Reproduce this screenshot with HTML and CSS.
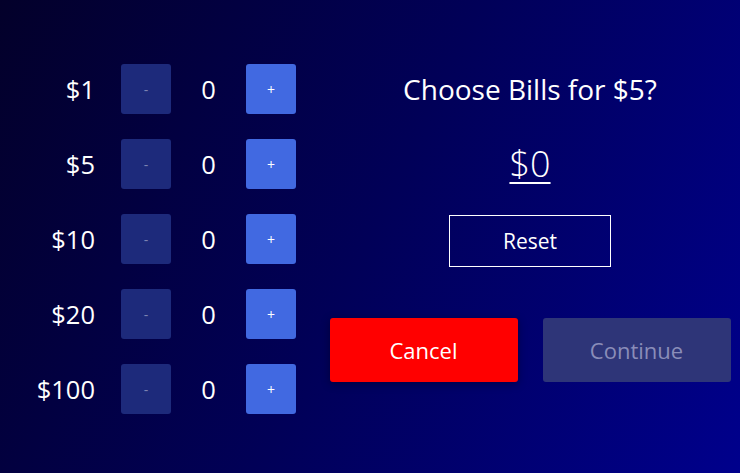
FILE: index.html
```html
<!DOCTYPE html>
<html>
<head>
<meta charset="utf-8">
<link rel="stylesheet" href="styles.css">
</head>
<body>
<div class="screen">
  <div class="bills">
    <div class="row"><span class="label">$1</span><button class="btn minus">-</button><span class="count">0</span><button class="btn plus">+</button></div>
    <div class="row"><span class="label">$5</span><button class="btn minus">-</button><span class="count">0</span><button class="btn plus">+</button></div>
    <div class="row"><span class="label">$10</span><button class="btn minus">-</button><span class="count">0</span><button class="btn plus">+</button></div>
    <div class="row"><span class="label">$20</span><button class="btn minus">-</button><span class="count">0</span><button class="btn plus">+</button></div>
    <div class="row"><span class="label">$100</span><button class="btn minus">-</button><span class="count">0</span><button class="btn plus">+</button></div>
  </div>
  <div class="panel">
    <div class="title">Choose Bills for $5?</div>
    <div class="total">$0</div>
    <div class="reset-wrap"><button class="reset">Reset</button></div>
    <div class="actions">
      <button class="action cancel">Cancel</button>
      <button class="action continue">Continue</button>
    </div>
  </div>
</div>
</body>
</html>
```

FILE: styles.css
```css
html, body {
  margin: 0;
  padding: 0;
  height: 100%;
}
body {
  background: linear-gradient(115deg, #03002a 0%, #010058 50%, #00008c 100%);
  font-family: "Open Sans", "Noto Sans", sans-serif;
  color: #ffffff;
  overflow: hidden;
}
.screen {
  display: flex;
  padding: 64px 0 0 20px;
}
.bills {
  display: flex;
  flex-direction: column;
  gap: 25px;
}
.row {
  display: flex;
  align-items: center;
  height: 50px;
}
.label {
  width: 75px;
  margin-right: 26px;
  text-align: right;
  font-size: 25.5px;
}
.btn {
  width: 50px;
  height: 50px;
  border: none;
  border-radius: 3px;
  padding: 0;
  font-family: inherit;
  font-size: 14px;
}
.minus {
  background: #1d2a7b;
  color: #7c82b2;
}
.plus {
  background: #4169e1;
  color: #ffffff;
}
.count {
  width: 75px;
  text-align: center;
  font-size: 25.5px;
}
.panel {
  margin-left: 34px;
  width: 400px;
  display: flex;
  flex-direction: column;
  align-items: center;
}
.title {
  height: 50px;
  line-height: 50px;
  font-size: 28px;
}
.total {
  margin-top: 25px;
  height: 50px;
  line-height: 50px;
  font-size: 36px;
  font-weight: 300;
  text-decoration: underline;
  text-decoration-thickness: 2px;
  text-underline-offset: 5px;
}
.reset-wrap {
  margin-top: 26px;
}
.reset {
  width: 162px;
  height: 52px;
  background: transparent;
  border: 1px solid #ffffff;
  color: #ffffff;
  font-family: inherit;
  font-size: 21px;
  padding: 0;
}
.actions {
  margin-top: 51px;
  display: flex;
  gap: 25px;
}
.action {
  width: 188px;
  height: 64px;
  border: none;
  border-radius: 3px;
  font-family: inherit;
  font-size: 22px;
  padding: 0;
}
.cancel {
  background: #ff0000;
  color: #ffffff;
  box-shadow: 0 2px 8px rgba(0, 0, 0, 0.35);
}
.continue {
  background: #2e3578;
  color: #8a8db9;
}
```
